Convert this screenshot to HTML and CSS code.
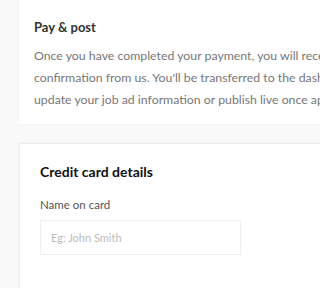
FILE: index.html
```html
<!DOCTYPE html>
<html>
<head>
<meta charset="utf-8">
<link rel="stylesheet" href="styles.css">
</head>
<body>
<div class="page">
  <section class="card intro">
    <h2 class="intro-title">Pay &amp; post</h2>
    <p class="intro-text">Once you have completed your payment, you will receive a<br>confirmation from us. You'll be transferred to the dashboard where you can<br>update your job ad information or publish live once approved.</p>
  </section>
  <section class="card payment">
    <h3 class="payment-title">Credit card details</h3>
    <label class="field-label" for="name">Name on card</label>
    <input class="field-input" id="name" type="text" placeholder="Eg: John Smith">
  </section>
</div>
</body>
</html>
```

FILE: styles.css
```css
html, body {
  margin: 0;
  padding: 0;
  background: #f9f9f9;
  font-family: Lato, "Open Sans", sans-serif;
  overflow: hidden;
  height: 288px;
}
.page {
  display: flex;
  flex-direction: column;
  gap: 19px;
  padding-left: 19px;
}
.card {
  background: #fff;
  box-shadow: 0 0 2px rgba(0,0,0,0.06);
  overflow: hidden;
}
.intro {
  padding: 17px 0 14px 15px;
  height: 93px;
}
.intro-title {
  margin: 0;
  font-size: 13px;
  font-weight: 700;
  color: #333;
  line-height: 20px;
}
.intro-text {
  margin: 8px 0 0 0;
  font-size: 12.3px;
  line-height: 22px;
  color: #777;
  white-space: nowrap;
}
.payment {
  border-top: 1px solid #ececec;
  border-left: 1px solid #f0f0f0;
  padding: 18px 20px 40px 20px;
  display: flex;
  flex-direction: column;
  align-items: flex-start;
}
.payment-title {
  margin: 0;
  font-size: 14px;
  font-weight: 700;
  color: #111;
  line-height: 20px;
}
.field-label {
  margin-top: 15px;
  font-size: 11.5px;
  color: #555;
  line-height: 16px;
}
.field-input {
  margin-top: 7px;
  box-sizing: border-box;
  width: 201px;
  height: 35px;
  border: 1px solid #efefef;
  background: #fff;
  padding: 0 10px;
  font-family: inherit;
  font-size: 11px;
  outline: none;
}
.field-input::placeholder {
  color: #bbb;
}
```
